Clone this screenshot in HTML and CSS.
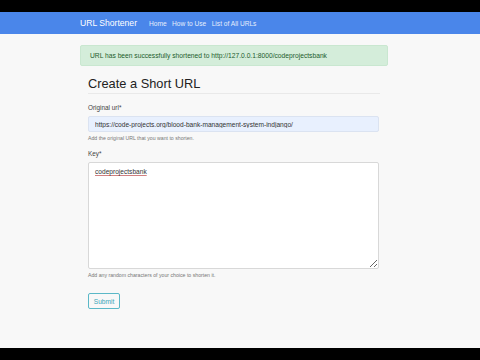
FILE: index.html
```html
<!DOCTYPE html>
<html lang="en">
<head>
<meta charset="utf-8">
<title>URL Shortener</title>
<link rel="stylesheet" href="styles.css">
</head>
<body>
<div class="screen">
  <nav class="navbar">
    <span class="brand">URL Shortener</span>
    <ul class="nav-links">
      <li>Home</li>
      <li>How to Use</li>
      <li>List of All URLs</li>
    </ul>
  </nav>
  <main class="container">
    <div class="alert">URL has been successfully shortened to http://127.0.0.1:8000/codeprojectsbank</div>
    <form class="form">
      <h2 class="title">Create a Short URL</h2>
      <div class="group">
        <label class="label">Original url*</label>
        <input class="input autofill" type="text" value="https://code-projects.org/blood-bank-management-system-indjango/">
        <small class="help">Add the original URL that you want to shorten.</small>
      </div>
      <div class="group">
        <label class="label">Key*</label>
        <textarea class="input area">codeprojectsbank</textarea>
        <small class="help">Add any random characters of your choice to shorten it.</small>
      </div>
      <button class="btn" type="button">Submit</button>
    </form>
  </main>
</div>
</body>
</html>
```
FILE: styles.css
```css
html, body {
  margin: 0;
  padding: 0;
  background: #000;
}
body {
  font-family: "Liberation Sans", Arial, sans-serif;
  padding: 12px 0;
}
.screen {
  height: 336px;
  background: #f8f8f8;
  overflow: hidden;
}
.navbar {
  height: 22px;
  background: #4a86ea;
  display: flex;
  align-items: center;
  padding-left: 80px;
  box-sizing: border-box;
}
.brand {
  color: #fff;
  font-size: 8.6px;
  margin-right: 12px;
}
.nav-links {
  list-style: none;
  margin: 0;
  padding: 0;
  display: flex;
  gap: 5.5px;
  color: #e6eefc;
  font-size: 6.6px;
}
.container {
  width: 308px;
  margin-left: 80px;
  padding-top: 11px;
}
.alert {
  height: 21px;
  box-sizing: border-box;
  background: #d4edda;
  border: 1px solid #c9e7d0;
  border-radius: 2px;
  color: #1d5c2c;
  font-size: 6.7px;
  padding: 0 9px;
  display: flex;
  align-items: center;
}
.form {
  padding: 0 8px;
}
.title {
  margin: 9px 0 0;
  font-size: 12.8px;
  font-weight: 400;
  color: #222;
  line-height: 17px;
  padding-bottom: 1px;
  border-bottom: 1px solid #e9e9e9;
}
.group {
  display: flex;
  flex-direction: column;
  width: 291px;
}
.label {
  font-size: 6.4px;
  color: #444;
  margin-top: 10px;
  line-height: 8px;
}
.input {
  margin-top: 4px;
  box-sizing: border-box;
  width: 291px;
  border: 1px solid #d8d8d8;
  border-radius: 2px;
  font-family: "Liberation Sans", Arial, sans-serif;
  font-size: 6.6px;
  color: #333;
  padding: 0 6px;
  background: #fff;
  outline: none;
}
.autofill {
  height: 16px;
  background: #e8f0fe;
  border-color: #dbe3f1;
}
.area {
  height: 107px;
  padding: 5px 6px;
  resize: vertical;
  text-decoration: underline #d08080;
  line-height: 8px;
}
.help {
  font-size: 5.2px;
  color: #777;
  margin-top: 3px;
  line-height: 6px;
}
.group + .group .label {
  margin-top: 9px;
}
.btn {
  margin-top: 15px;
  width: 32px;
  height: 16px;
  padding: 0;
  background: transparent;
  border: 1px solid #5bb8c7;
  border-radius: 2px;
  color: #3aa6b8;
  font-family: "Liberation Sans", Arial, sans-serif;
  font-size: 6.6px;
}
```
